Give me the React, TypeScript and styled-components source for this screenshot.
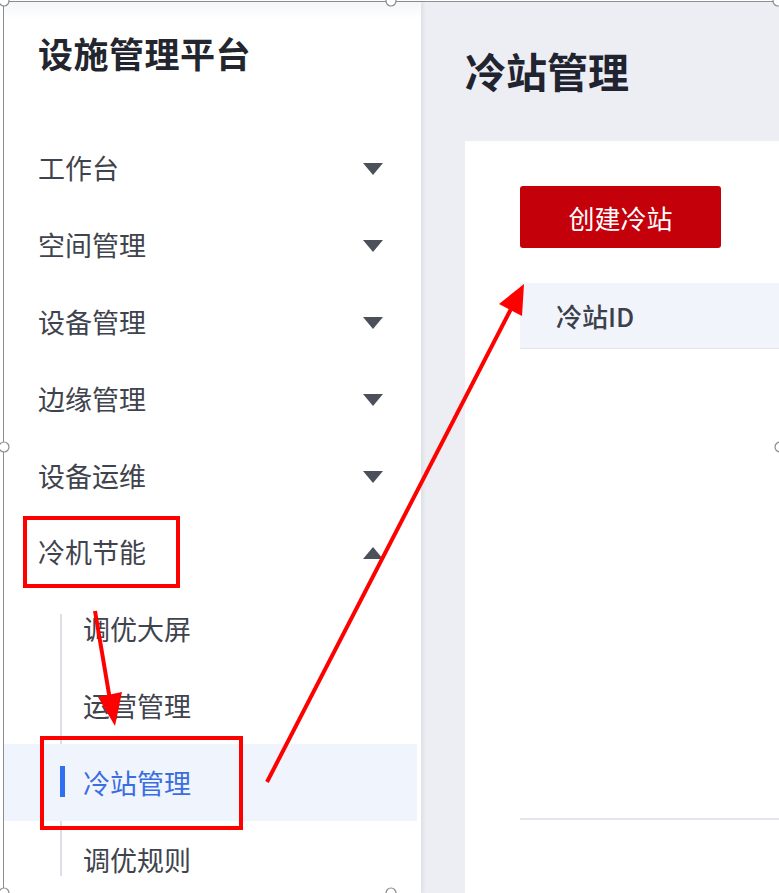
import styled, { createGlobalStyle } from 'styled-components';

const GlobalStyle = createGlobalStyle`
  html, body {
    margin: 0;
    padding: 0;
    background: #ffffff;
    overflow: hidden;
  }
  * {
    box-sizing: border-box;
  }
  body {
    font-family: 'Noto Sans CJK SC', 'Noto Sans', sans-serif;
  }
`;

interface NavItem {
  label: string;
  open?: boolean;
  children?: { label: string; active?: boolean }[];
}

const menu: NavItem[] = [
  { label: '工作台' },
  { label: '空间管理' },
  { label: '设备管理' },
  { label: '边缘管理' },
  { label: '设备运维' },
  {
    label: '冷机节能',
    open: true,
    children: [
      { label: '调优大屏' },
      { label: '运营管理' },
      { label: '冷站管理', active: true },
      { label: '调优规则' },
    ],
  },
];

const handles = [
  [4, 1],
  [391, 1],
  [778, 1],
  [4, 447],
  [780, 447],
  [4, 893],
  [391, 893],
];

const Caret = ({ up }: { up?: boolean }) => (
  <CaretSvg width={20} height={12} viewBox="0 0 20 12">
    {up ? (
      <polygon points="10,0 20,12 0,12" fill="#4b505b" />
    ) : (
      <polygon points="0,0 20,0 10,12" fill="#4b505b" />
    )}
  </CaretSvg>
);

const App = () => {
  return (
    <Page>
      <GlobalStyle />
      <Frame>
        <Sidebar>
          <Brand>设施管理平台</Brand>
          <Menu>
            {menu.map(item => (
              <div key={item.label}>
                <MenuItem>
                  <span>{item.label}</span>
                  <Caret up={item.open} />
                </MenuItem>
                {item.children ? (
                  <SubMenu>
                    {item.children.map(sub => (
                      <SubItem key={sub.label} $active={sub.active}>
                        {sub.label}
                      </SubItem>
                    ))}
                  </SubMenu>
                ) : (
                  <></>
                )}
              </div>
            ))}
          </Menu>
        </Sidebar>
        <Main>
          <PageTitle>冷站管理</PageTitle>
          <Card>
            <PrimaryButton>创建冷站</PrimaryButton>
            <TableHead>
              <HeadCell>冷站ID</HeadCell>
            </TableHead>
            <TableBody />
          </Card>
        </Main>
      </Frame>

      {/* annotations drawn over the screenshot */}
      <Markup width={779} height={893} viewBox="0 0 779 893">
        <rect x={25} y={518} width={153} height={68} fill="none" stroke="#ff0000" strokeWidth={4} />
        <rect x={42} y={738} width={199} height={90} fill="none" stroke="#ff0000" strokeWidth={4} />
        <line x1={95} y1={611} x2={110} y2={700} stroke="#ff0000" strokeWidth={4} />
        <polygon points="115,726 122,692 98,697" fill="#ff0000" />
        <line x1={267} y1={782} x2={512} y2={307} stroke="#ff0000" strokeWidth={4} />
        <polygon points="524,284 522,316 499,304" fill="#ff0000" />
        {handles.map(([cx, cy], i) => (
          <circle key={i} cx={cx} cy={cy} r={5} fill="#ffffff" stroke="#8c8c8c" strokeWidth={1.2} />
        ))}
      </Markup>
    </Page>
  );
};

export default App;

const Page = styled.div`
  position: relative;
  width: 779px;
  height: 893px;
  overflow: hidden;
`;

const Frame = styled.div`
  display: flex;
  margin-left: 3px;
  margin-top: 1px;
  width: 800px;
  height: 892px;
  border-left: 1px solid #8f8f8f;
  border-top: 1px solid #8f8f8f;
`;

const Sidebar = styled.div`
  position: relative;
  z-index: 1;
  width: 417px;
  flex-shrink: 0;
  background: linear-gradient(#f5f6f9 0px, #ffffff 18px);
  box-shadow: 2px 0 4px rgba(30, 40, 60, 0.08);
`;

const Brand = styled.div`
  padding: 16px 0 0 34px;
  height: 86px;
  font-size: 35px;
  line-height: 70px;
  font-weight: 700;
  color: #23262e;
  letter-spacing: 0.5px;
`;

const Menu = styled.div`
  margin-top: 41.6px;
`;

const MenuItem = styled.div`
  display: flex;
  align-items: center;
  justify-content: space-between;
  height: 76.8px;
  padding: 0 34px 0 34px;
  margin-right: 4px;
  font-size: 27px;
  color: #3f434d;
  cursor: pointer;
`;

const CaretSvg = styled.svg`
  margin-top: 3px;
`;

const SubMenu = styled.div`
  position: relative;

  &::before {
    content: '';
    position: absolute;
    left: 56px;
    top: 24px;
    bottom: 22px;
    width: 2px;
    background: #dcdfe5;
  }
`;

const SubItem = styled.div<{ $active?: boolean }>`
  position: relative;
  display: flex;
  align-items: center;
  height: 76.8px;
  margin-right: 4px;
  padding-left: 79px;
  font-size: 27px;
  color: ${p => (p.$active ? '#3a6ee0' : '#3f434d')};
  background: ${p => (p.$active ? '#f0f4fc' : 'transparent')};
  cursor: pointer;

  &::before {
    content: '';
    display: ${p => (p.$active ? 'block' : 'none')};
    position: absolute;
    left: 56px;
    top: 22px;
    width: 5px;
    height: 31px;
    background: #2f6ff0;
  }
`;

const Main = styled.div`
  flex: 1;
  background: #edeef3;
  padding: 39px 0 0 44px;
`;

const PageTitle = styled.h1`
  margin: 0;
  font-size: 41px;
  line-height: 58px;
  font-weight: 700;
  color: #1f2430;
`;

const Card = styled.div`
  margin-top: 42px;
  background: #ffffff;
  padding: 45px 0 0 55px;
  height: 800px;
`;

const PrimaryButton = styled.button`
  display: block;
  width: 201px;
  height: 62px;
  border: none;
  border-radius: 3px;
  background: #c4000b;
  color: #ffffff;
  font-family: 'Noto Sans CJK SC', sans-serif;
  font-size: 26px;
  cursor: pointer;
`;

const TableHead = styled.div`
  display: flex;
  align-items: center;
  margin-top: 35px;
  height: 66px;
  background: #f1f4fb;
  border-bottom: 1px solid #e1e4ea;
`;

const HeadCell = styled.div`
  padding-left: 36px;
  font-size: 26px;
  font-weight: 500;
  color: #3b404b;
`;

const TableBody = styled.div`
  height: 471px;
  border-bottom: 2px solid #e3e6ec;
`;

const Markup = styled.svg`
  position: absolute;
  left: 0;
  top: 0;
  pointer-events: none;
  z-index: 5;
`;
